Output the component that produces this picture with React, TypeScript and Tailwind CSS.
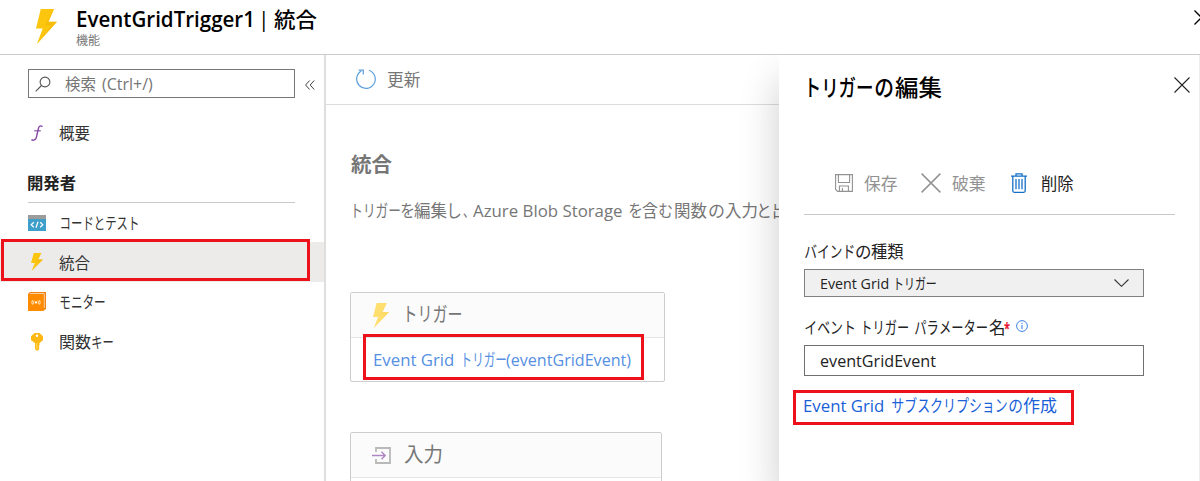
import { useLayoutEffect, useRef, useState, type ReactNode } from "react";
import clsx from "clsx";

/* A run of text whose drawn glyphs fill exactly the width of its box. */
function Run({ className, children }: { className?: string; children: string }) {
  const ref = useRef<HTMLSpanElement>(null);
  const [transform, setTransform] = useState("none");
  useLayoutEffect(() => {
    const el = ref.current;
    const ctx = document.createElement("canvas").getContext("2d");
    if (!el || !ctx) return;
    const cs = getComputedStyle(el);
    ctx.font = `${cs.fontWeight} ${cs.fontSize} ${cs.fontFamily}`;
    ctx.fontKerning = "none";
    const m = ctx.measureText(children);
    const ink = m.actualBoundingBoxLeft + m.actualBoundingBoxRight;
    if (ink > 0) {
      setTransform(`scaleX(${el.offsetWidth / ink}) translateX(${m.actualBoundingBoxLeft}px)`);
    }
  }, [children]);
  return (
    <span ref={ref} className={clsx("block shrink-0 whitespace-pre leading-none [font-kerning:none]", className)}>
      <span className="inline-block origin-left" style={{ transform }}>
        {children}
      </span>
    </span>
  );
}

function Bolt({ className, light }: { className: string; light?: boolean }) {
  return (
    <svg viewBox="0 0 22 36" preserveAspectRatio="none" className={clsx("shrink-0", className)}>
      <path d="M5 0H19L13 13H22L1 36L7 20H0Z" fill={light ? "#ffdf70" : "#fcc60e"} />
      <path d="M19 0L9 17H16L1 36L22 13H13Z" fill={light ? "#fbd75f" : "#f5b60a"} opacity=".6" />
    </svg>
  );
}

function Cross({ className, width = 1.1 }: { className: string; width?: number }) {
  return (
    <svg viewBox="0 0 16 16" fill="none" stroke="currentColor" strokeWidth={width} className={clsx("shrink-0", className)}>
      <path d="M.5.5 15.5 15.5M15.5.5.5 15.5" />
    </svg>
  );
}

function NavItem({ icon, children, active }: { icon: ReactNode; children: ReactNode; active?: boolean }) {
  return (
    <div className={clsx("flex h-[39.7px] items-center pl-[28px]", active && "bg-[#edebe9]")}>
      <div className="flex w-[31px] shrink-0 items-center">{icon}</div>
      {children}
    </div>
  );
}

function Header() {
  return (
    <header className="flex h-[55px] shrink-0 border-b border-[#cccccc]">
      <Bolt className="ml-[36px] mt-[9px] h-[35px] w-[21px]" />
      <div className="ml-[20px] flex flex-col">
        <div className="mt-[8px] flex h-[22px] items-center text-[21px] font-semibold text-black">
          <Run className="w-[175px]">EventGridTrigger1</Run>
          <Run className="ml-[11px] w-[2px] font-normal">|</Run>
          <Run className="ml-[9px] w-[43px] font-medium">統合</Run>
        </div>
        <div className="-ml-px mt-[5px] flex text-[12px] text-[#777]">
          <Run className="w-[24px]">機能</Run>
        </div>
      </div>
      <Cross className="-mr-[9px] ml-auto mt-[10px] size-[15px] text-black" width={1.4} />
    </header>
  );
}

function Sidebar() {
  return (
    <aside className="relative w-[326px] shrink-0 border-r-2 border-[#dedede] text-[16px] text-[#333]">
      <div className="ml-[28px] mt-[14px] flex items-center">
        <div className="flex h-[29px] w-[267px] items-center border border-[#777] text-[#767676]">
          <svg viewBox="0 0 16 16" fill="none" stroke="#555" strokeWidth="1.1" className="ml-[6px] size-[16px]">
            <circle cx="10" cy="6" r="4.9" />
            <path d="M6.5 9.5.7 15.3" />
          </svg>
          <Run className="ml-[14px] w-[31px]">検索</Run>
          <Run className="ml-[6px] w-[51px]">(Ctrl+/)</Run>
        </div>
        <svg viewBox="0 0 10 10" fill="none" stroke="#444" strokeWidth="1" className="ml-[10px] mt-[2px] size-[10px]">
          <path d="M4.6.5.6 5l4 4.5M9.2.5 5.2 5l4 4.5" />
        </svg>
      </div>

      <div className="mt-[15px]">
        <NavItem
          icon={
            <svg viewBox="0 0 12 16" fill="none" stroke="#8647a2" strokeWidth="1.4" className="ml-[3px] h-[16px] w-[12px]">
              <path d="M11.5 1.6C9.5.1 8 1 7.5 3.2L5.4 12.4C4.8 15 2.5 15.9.4 14.7" />
              <path d="M3.2 5.8H9.8" strokeWidth="1.1" />
            </svg>
          }
        >
          <Run className="w-[31px]">概要</Run>
        </NavItem>
      </div>

      <div className="ml-[28px] mt-[12px] flex h-[38px] w-[267px] items-center border-b border-[#c8c8c8] font-bold text-[#222]">
        <Run className="w-[48px]">開発者</Run>
      </div>

      <NavItem
        icon={
          <svg viewBox="0 0 18 16" className="h-[16px] w-[18px]">
            <rect width="18" height="16" fill="#3f9fcb" />
            <rect width="18" height="4" fill="#9c9c9c" />
            <path d="M5.8 7.3 3.2 9.8l2.6 2.4M12.2 7.3l2.6 2.5-2.6 2.4M10 6.8 8 12.8" fill="none" stroke="#fff" strokeWidth="1.2" />
          </svg>
        }
      >
        <Run className="ml-[2px] w-[77px]">コードとテスト</Run>
      </NavItem>
      <NavItem active icon={<Bolt className="ml-[3px] h-[18px] w-[12px]" />}>
        <Run className="mt-[2px] w-[31px]">統合</Run>
      </NavItem>
      <NavItem
        icon={
          <svg viewBox="0 0 18 19" className="h-[19px] w-[18px]">
            <path d="M2 0H18V17L15 19H0V2Z" fill="#f08210" />
            <path d="M2 1.6H16.2V16" fill="none" stroke="#fff" strokeWidth=".7" />
            <rect y="2.2" width="15.4" height="16.8" fill="#ff8c00" />
            <circle cx="8" cy="10.4" r="1.1" fill="#fff" />
            <path d="M6 8.7q-1.2 1.7 0 3.4M10 8.7q1.2 1.7 0 3.4M4.5 8.2q-1.4 2.2 0 4.4M11.5 8.2q1.4 2.2 0 4.4" fill="none" stroke="#fff" strokeWidth=".8" />
          </svg>
        }
      >
        <Run className="ml-[1px] w-[45px]">モニター</Run>
      </NavItem>
      <NavItem
        icon={
          <svg viewBox="0 0 12 18" className="ml-[3px] h-[18px] w-[12px]">
            <path d="M3.5 0h5L12 3.2v4L8.5 10v2L7.7 13l.8 1-.8 1 .8 1L6 18 4 16V10L0 7.2v-4Z" fill="#fdb813" />
            <path d="M5.2 10h1.2v6.5l-1.2-.9Z" fill="#ffda57" />
            <circle cx="6" cy="2.7" r="1.2" fill="#fff" />
          </svg>
        }
      >
        <Run className="ml-[1px] w-[31px]">関数</Run>
        <Run className="ml-[1px] w-[21px]">キー</Run>
      </NavItem>

      <div className="absolute left-[1px] top-[184px] h-[42px] w-[309px] border-3 border-[#ed111b]" />
    </aside>
  );
}

function Main() {
  return (
    <main className="w-[453px] shrink-0 overflow-hidden text-[#767676]">
      <div className="flex h-[50px] items-center border-b border-[#dcdcdc] pl-[30px] text-[16.5px]">
        <svg viewBox="0 0 20 20" fill="none" stroke="#5a9fdc" strokeWidth="1.2" className="-mt-[1px] size-[20px]">
          <path d="M12.8 1.2A9.3 9.3 0 1 1 5.3 2" />
          <path d="M2.7 1.1H7.3V5.6" />
        </svg>
        <Run className="ml-[11px] mt-[2px] w-[33px]">更新</Run>
      </div>

      <div className="ml-[25px]">
        <div className="mt-[49px] flex h-[22px] items-center text-[20px] font-bold">
          <Run className="w-[41px]">統合</Run>
        </div>
        <div className="mt-[23px] flex h-[22px] w-[460px] items-center text-[17px]">
          <Run className="ml-[3px] w-[46px]">トリガー</Run>
          <Run className="ml-[1px] w-[12px]">を</Run>
          <Run className="ml-[1px] w-[33px]">編集</Run>
          <Run className="ml-[3px] w-[11px]">し</Run>
          <Run className="ml-[2px] w-[4px]">、</Run>
          <Run className="ml-[6px] w-[149px]">Azure Blob Storage</Run>
          <Run className="ml-[7px] w-[12px]">を</Run>
          <Run className="ml-[1px] w-[16px]">含</Run>
          <Run className="ml-[1px] w-[13px]">む</Run>
          <Run className="ml-[3px] w-[32px]">関数</Run>
          <Run className="ml-[2px] w-[15px]">の</Run>
          <Run className="ml-[1px] w-[32px]">入力</Run>
          <Run className="ml-[2px] w-[11px]">と</Run>
          <Run className="ml-[3px] w-[15px]">出</Run>
        </div>

        <section className="relative -ml-[1px] mt-[71px] h-[90px] w-[315px] rounded-xs border-[1.5px] border-[#cdcdcd]">
          <div className="flex h-[45px] items-center border-b border-[#e6e6e6] bg-[#fbfbfb] pl-[22px] text-[20px]">
            <Bolt light className="h-[25px] w-[16px]" />
            <Run className="ml-[18px] w-[54px]">トリガー</Run>
          </div>
          <div className="flex h-[42px] items-center pl-[23px] text-[17px] text-[#5590e2]">
            <Run className="w-[79px]">Event Grid</Run>
            <Run className="ml-[11px] w-[42px]">トリガー</Run>
            <Run className="w-[125px]">(eventGridEvent)</Run>
          </div>
          <div className="absolute left-[12px] top-[41px] h-[46px] w-[281px] border-3 border-[#ed111b]" />
        </section>

        <section className="-ml-[1px] mt-[50px] h-[91px] w-[312px] rounded-xs border-[1.5px] border-[#cdcdcd]">
          <div className="flex h-[45px] items-center border-b border-[#e6e6e6] bg-[#fbfbfb] pl-[21px] text-[20px]">
            <svg viewBox="0 0 19 17" fill="none" className="h-[17px] w-[19px]">
              <path d="M4 5V1H18V16H4V12" stroke="#b9b9b9" strokeWidth="1.8" />
              <path d="M0 8.5H13M9.5 4.8 13.2 8.5 9.5 12.2" stroke="#ae86c4" strokeWidth="1.4" />
            </svg>
            <Run className="ml-[13px] w-[38px]">入力</Run>
          </div>
        </section>
      </div>
    </main>
  );
}

function EditPanel() {
  return (
    <section className="relative flex-1 border-r border-[#ededed] bg-white pl-[25px] text-[16.5px] text-[#222] shadow-[0_25px_38px_rgba(0,0,0,0.2)]">
      <div className="flex h-[64px] items-center text-[23px] font-medium text-black">
        <Run className="ml-[5px] w-[63px]">トリガー</Run>
        <Run className="ml-[3px] w-[18px]">の</Run>
        <Run className="ml-[2px] w-[47px]">編集</Run>
        <Cross className="-mt-[4px] ml-auto mr-[9px] size-[16px] text-[#222]" />
      </div>

      <div className="mt-[34px] flex h-[62px] w-[371px] items-center border-b border-[#c8c8c8] pl-[31px] text-[#929292]">
        <svg viewBox="0 0 18 18" fill="none" stroke="#929292" strokeWidth="1.1" className="-mt-[2px] size-[18px]">
          <path d="M.6.6H17.4V17.4H2.6L.6 15.4Z" />
          <path d="M3.4.6V8.5H14.6V.6M4.4 17.4V12H13.4V17.4M7.4 14V17.4" />
        </svg>
        <Run className="ml-[11px] mt-[2px] w-[33px]">保存</Run>
        <Cross className="-mt-[2px] ml-[24px] size-[20px]" width={1.2} />
        <Run className="ml-[11px] mt-[2px] w-[33px]">破棄</Run>
        <svg viewBox="0 0 16 20" fill="none" stroke="#1470c8" strokeWidth="1.3" className="-mt-[2px] ml-[26px] h-[20px] w-[16px]">
          <path d="M0 3.2H16M5 3V.8H11V3M1.8 3.5V17.8Q1.8 19.3 3.2 19.3H12.8Q14.2 19.3 14.2 17.8V3.5M5 6V16.2M8 6V16.2M11 6V16.2" />
        </svg>
        <Run className="ml-[14px] mt-[2px] w-[33px] text-[#222]">削除</Run>
      </div>

      <div className="mt-[25px] flex h-[24px] items-center">
        <Run className="ml-[1px] w-[49px]">バインド</Run>
        <Run className="ml-[2px] w-[14px]">の</Run>
        <Run className="ml-[1px] w-[33px]">種類</Run>
      </div>
      <div className="mt-[5px] flex h-[28px] w-[340px] items-center border border-[#808080] bg-[#f0f0f0] pl-[16px] pr-[14px] text-[15px]">
        <Run className="w-[67px]">Event Grid</Run>
        <Run className="ml-[8px] w-[40px]">トリガー</Run>
        <svg viewBox="0 0 15 8" fill="none" stroke="#333" strokeWidth="1.1" className="ml-auto h-[8px] w-[15px]">
          <path d="M.5.5 7.5 7.3 14.5.5" />
        </svg>
      </div>

      <div className="mt-[19px] flex h-[24px] items-center">
        <Run className="ml-[1px] w-[49px]">イベント</Run>
        <Run className="ml-[10px] w-[44px]">トリガー</Run>
        <Run className="ml-[7px] w-[72px]">パラメーター</Run>
        <Run className="ml-[2px] w-[15px]">名</Run>
        <Run className="w-[6px] font-bold text-[#e8112a]">*</Run>
        <svg viewBox="0 0 12 12" fill="none" stroke="#2a75e6" className="-mt-[5px] ml-[6px] size-[12px]">
          <circle cx="6" cy="6" r="5.4" strokeWidth=".9" />
          <path d="M6 5V9M6 2.8V4" strokeWidth="1" />
        </svg>
      </div>
      <div className="mt-[5px] flex h-[31px] w-[340px] items-center border border-[#707070] pl-[15px] pt-[2px]">
        <Run className="w-[116px]">eventGridEvent</Run>
      </div>

      <div className="mt-[18px] flex h-[22px] items-center text-[17px] text-[#1a5fd8]">
        <Run className="w-[79px]">Event Grid</Run>
        <Run className="ml-[9px] w-[115px]">サブスクリプション</Run>
        <Run className="ml-[2px] w-[13px]">の</Run>
        <Run className="ml-[1px] w-[34px]">作成</Run>
      </div>
      <div className="absolute left-[14px] top-[335px] h-[35px] w-[281px] border-3 border-[#ed111b]" />
    </section>
  );
}

export default function App() {
  return (
    <div className="flex h-[481px] w-[1200px] flex-col overflow-hidden bg-white font-['Open_Sans','Noto_Sans_CJK_JP',sans-serif]">
      <Header />
      <div className="flex flex-1 overflow-hidden">
        <Sidebar />
        <Main />
        <EditPanel />
      </div>
    </div>
  );
}
